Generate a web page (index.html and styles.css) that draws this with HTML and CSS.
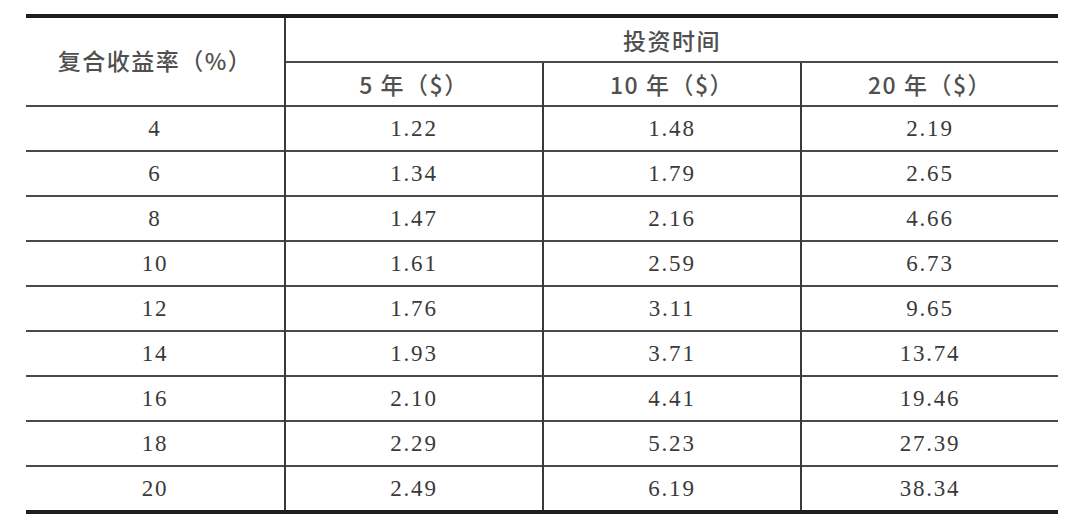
FILE: index.html
```html
<!DOCTYPE html>
<html lang="zh">
<head>
<meta charset="utf-8">
<title>复合收益率</title>
<link rel="stylesheet" href="styles.css">
</head>
<body>
<table class="rates">
  <colgroup>
    <col class="c1">
    <col class="c2">
    <col class="c3">
    <col class="c4">
  </colgroup>
  <thead>
    <tr class="h1">
      <th class="lead" rowspan="2">复合收益率（%）</th>
      <th colspan="3">投资时间</th>
    </tr>
    <tr class="h2">
      <th>5 年（$）</th>
      <th>10 年（$）</th>
      <th>20 年（$）</th>
    </tr>
  </thead>
  <tbody>
    <tr><td class="lead">4</td><td>1.22</td><td>1.48</td><td>2.19</td></tr>
    <tr><td class="lead">6</td><td>1.34</td><td>1.79</td><td>2.65</td></tr>
    <tr><td class="lead">8</td><td>1.47</td><td>2.16</td><td>4.66</td></tr>
    <tr><td class="lead">10</td><td>1.61</td><td>2.59</td><td>6.73</td></tr>
    <tr><td class="lead">12</td><td>1.76</td><td>3.11</td><td>9.65</td></tr>
    <tr><td class="lead">14</td><td>1.93</td><td>3.71</td><td>13.74</td></tr>
    <tr><td class="lead">16</td><td>2.10</td><td>4.41</td><td>19.46</td></tr>
    <tr><td class="lead">18</td><td>2.29</td><td>5.23</td><td>27.39</td></tr>
    <tr><td class="lead">20</td><td>2.49</td><td>6.19</td><td>38.34</td></tr>
  </tbody>
</table>
</body>
</html>
```

FILE: styles.css
```css
html, body {
  margin: 0;
  padding: 0;
  background: #ffffff;
}

body {
  padding: 14px 0 0 26px;
}

.rates {
  border-collapse: collapse;
  table-layout: fixed;
  width: 1032px;
  border-top: 4px solid #1e1e1e;
  border-bottom: 4px solid #1e1e1e;
  color: #3a3a3a;
}

.rates .c1 { width: 259px; }
.rates .c2 { width: 258px; }
.rates .c3 { width: 258px; }
.rates .c4 { width: 257px; }

.rates th,
.rates td {
  padding: 0;
  text-align: center;
  vertical-align: middle;
  border-top: 2px solid #4a4a4a;
  border-left: 2px solid #3a3a3a;
}

.rates th.lead,
.rates td.lead {
  border-left: none;
}

.rates th {
  font-family: "Noto Sans CJK SC", "Liberation Sans", sans-serif;
  font-weight: 500;
  font-size: 23px;
  letter-spacing: 1.5px;
  color: #505050;
}

.rates th.lead {
  padding-bottom: 3px;
}

.rates tr.h1 th {
  border-top: none;
  height: 43px;
}

.rates tr.h2 th {
  height: 42px;
}

.rates td {
  font-family: "Liberation Serif", "Times New Roman", serif;
  font-size: 23px;
  letter-spacing: 1.8px;
  height: 43px;
}
```
